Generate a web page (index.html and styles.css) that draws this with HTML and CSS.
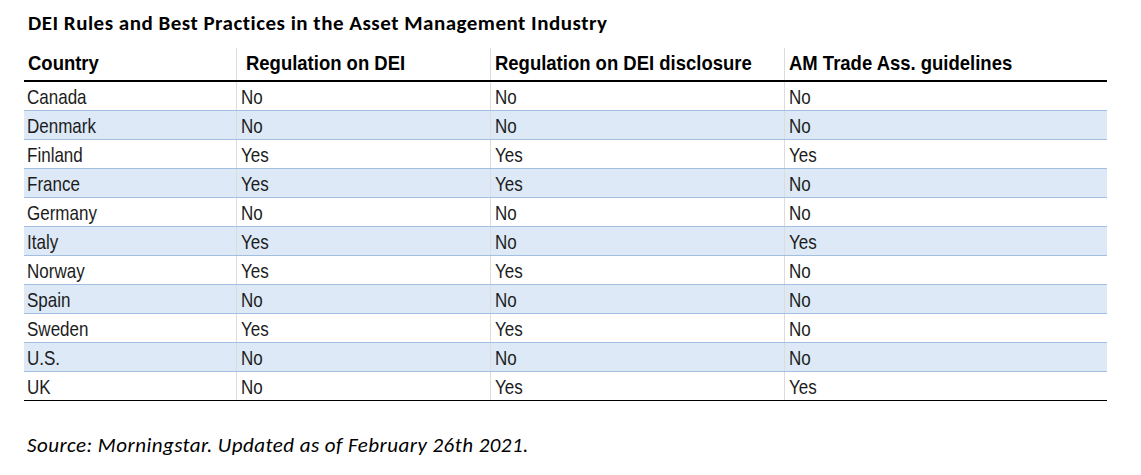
FILE: index.html
```html
<!DOCTYPE html>
<html lang="en">
<head>
<meta charset="utf-8">
<title>DEI Rules and Best Practices in the Asset Management Industry</title>
<link rel="stylesheet" href="styles.css">
</head>
<body>
<main class="page">
  <h1 class="title">DEI Rules and Best Practices in the Asset Management Industry</h1>
  <table class="dei">
    <colgroup>
      <col class="c1"><col class="c2"><col class="c3"><col class="c4">
    </colgroup>
    <thead>
      <tr>
        <th><span class="t">Country</span></th>
        <th class="sep indent"><span class="t">Regulation on DEI</span></th>
        <th class="sep"><span class="t">Regulation on DEI disclosure</span></th>
        <th class="sep"><span class="t">AM Trade Ass. guidelines</span></th>
      </tr>
    </thead>
    <tbody>
      <tr><td><span class="t">Canada</span></td><td class="sep"><span class="t">No</span></td><td class="sep"><span class="t">No</span></td><td class="sep"><span class="t">No</span></td></tr>
      <tr class="alt"><td><span class="t">Denmark</span></td><td class="sep"><span class="t">No</span></td><td class="sep"><span class="t">No</span></td><td class="sep"><span class="t">No</span></td></tr>
      <tr><td><span class="t">Finland</span></td><td class="sep"><span class="t">Yes</span></td><td class="sep"><span class="t">Yes</span></td><td class="sep"><span class="t">Yes</span></td></tr>
      <tr class="alt"><td><span class="t">France</span></td><td class="sep"><span class="t">Yes</span></td><td class="sep"><span class="t">Yes</span></td><td class="sep"><span class="t">No</span></td></tr>
      <tr><td><span class="t">Germany</span></td><td class="sep"><span class="t">No</span></td><td class="sep"><span class="t">No</span></td><td class="sep"><span class="t">No</span></td></tr>
      <tr class="alt"><td><span class="t">Italy</span></td><td class="sep"><span class="t">Yes</span></td><td class="sep"><span class="t">No</span></td><td class="sep"><span class="t">Yes</span></td></tr>
      <tr><td><span class="t">Norway</span></td><td class="sep"><span class="t">Yes</span></td><td class="sep"><span class="t">Yes</span></td><td class="sep"><span class="t">No</span></td></tr>
      <tr class="alt"><td><span class="t">Spain</span></td><td class="sep"><span class="t">No</span></td><td class="sep"><span class="t">No</span></td><td class="sep"><span class="t">No</span></td></tr>
      <tr><td><span class="t">Sweden</span></td><td class="sep"><span class="t">Yes</span></td><td class="sep"><span class="t">Yes</span></td><td class="sep"><span class="t">No</span></td></tr>
      <tr class="alt"><td><span class="t">U.S.</span></td><td class="sep"><span class="t">No</span></td><td class="sep"><span class="t">No</span></td><td class="sep"><span class="t">No</span></td></tr>
      <tr class="last"><td><span class="t">UK</span></td><td class="sep"><span class="t">No</span></td><td class="sep"><span class="t">Yes</span></td><td class="sep"><span class="t">Yes</span></td></tr>
    </tbody>
  </table>
  <p class="source">Source: Morningstar. Updated as of February 26th 2021.</p>
</main>
</body>
</html>
```

FILE: styles.css
```css
html, body {
  margin: 0;
  padding: 0;
  background: #ffffff;
}

.page {
  padding: 10px 0 0 24px;
  width: 1083px;
}

.title {
  margin: 0 0 0 4px;
  font-family: "Carlito", "Lato", "Liberation Sans", sans-serif;
  font-weight: 700;
  font-size: 21px;
  letter-spacing: 0.5px;
  line-height: 26px;
  color: #000;
}

.dei {
  margin-top: 12px;
  width: 1083px;
  border-collapse: collapse;
  table-layout: fixed;
  font-family: "Liberation Sans", Arial, sans-serif;
  color: #1c1c1c;
}

.c1 { width: 212px; }
.c2 { width: 254px; }
.c3 { width: 294px; }
.c4 { width: 323px; }

.t {
  display: inline-block;
  white-space: nowrap;
  transform-origin: left center;
}

.dei th {
  height: 29px;
  padding: 3px 0 0 4px;
  text-align: left;
  vertical-align: top;
  font-size: 21px;
  font-weight: 700;
  line-height: 24px;
  border-bottom: 2px solid #000;
  color: #000;
}

.dei th .t {
  transform: scaleX(0.88);
}

.dei td {
  height: 25px;
  padding: 3px 0 0 3px;
  font-size: 21px;
  line-height: 24px;
  vertical-align: top;
  border-bottom: 1px solid #a3bfdf;
}

.dei td .t {
  transform: scaleX(0.81);
}

.dei .sep {
  border-left: 1px solid #dcdcdc;
}

.dei th.sep,
.dei td.sep {
  padding-left: 4px;
}

.dei th.indent {
  padding-left: 9px;
}

.dei tr.alt td {
  background: #dde9f6;
}

.dei tr.last td {
  border-bottom: 1px solid #000;
}

.source {
  margin: 31px 0 0 3px;
  font-family: "Carlito", "Lato", "Liberation Sans", sans-serif;
  font-style: italic;
  font-size: 21px;
  letter-spacing: 0.45px;
  line-height: 26px;
  color: #000;
}
```
